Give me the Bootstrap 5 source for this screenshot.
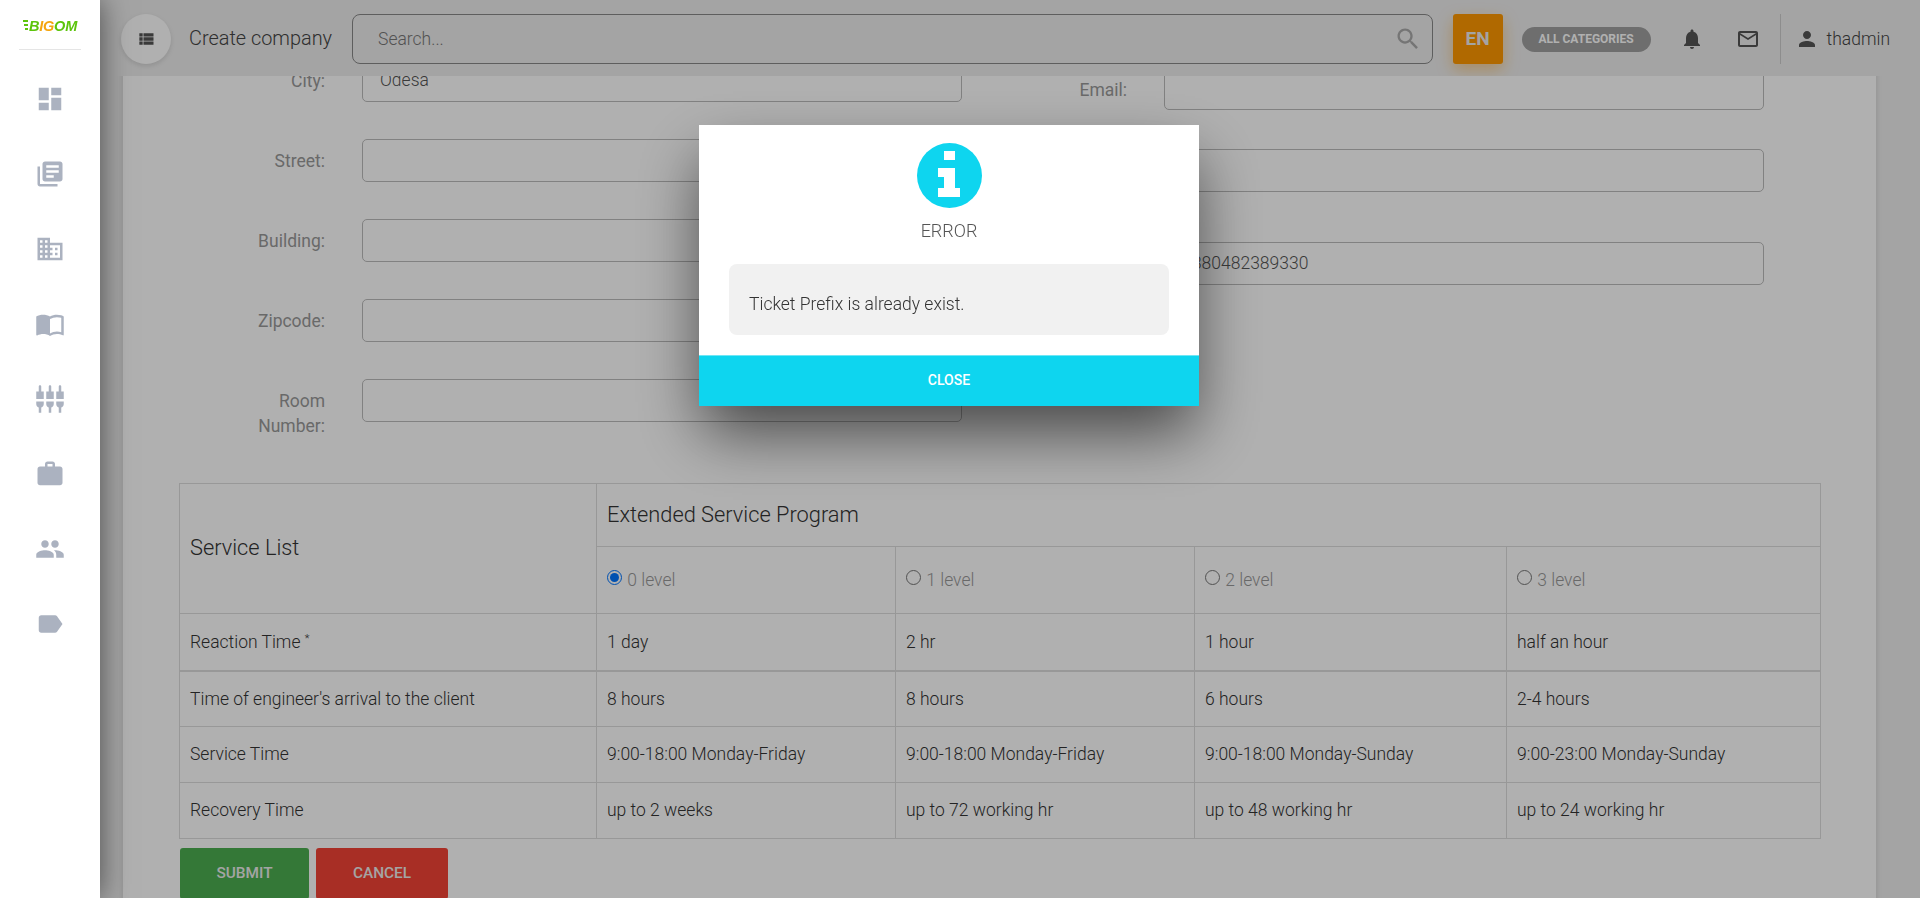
<!DOCTYPE html>
<html lang="en">
<head>
<meta charset="utf-8">
<title>Create company</title>
<link href="https://cdn.jsdelivr.net/npm/bootstrap@5.3.0/dist/css/bootstrap.min.css" rel="stylesheet">
<style>
html,body{height:100%;overflow:hidden}
body{font-family:Roboto,"Liberation Sans",sans-serif;font-weight:300;background:#eee;color:#333}
.shell{height:898px}
.side{width:100px;flex:none;background:#fff;position:relative;z-index:20;box-shadow:0 0 28px rgba(0,0,0,.55)}
.logo-wrap{height:50px;margin:0 19px;border-bottom:1px solid #e5e5e5;padding-top:19px;gap:1px}
.logo-txt{font:italic 700 14.5px/14px "Liberation Sans",sans-serif;letter-spacing:-.2px;color:#5cc40c}
.logo-txt b{color:#f5a50f;font-weight:700}
.side-ic{width:30px;height:30px;fill:#abb2c0;display:block}
.side-list{padding-top:34px;gap:45px}
.main-col{min-width:0;height:898px}
.topbar{height:76px;padding:14px 30px 12px 21px;flex:none}
.round-btn{width:50px;height:50px;border-radius:50%;background:#fff;box-shadow:0 2px 5px rgba(0,0,0,.12);flex:none}
.round-btn svg{width:20px;height:20px;fill:#555}
.page-name{font-size:19.9px;color:#444;margin:0 20px 0 18px;white-space:nowrap}
.search-box{flex:1;height:50px;border:1px solid #888;border-radius:8px;padding:0 10px 0 25px;background:transparent}
.search-box span{font-size:17.5px;color:#777}
.search-box svg{width:28px;height:28px;fill:#aaa}
.lang{width:50px;height:50px;background:#ff9800;color:#eee;font-weight:700;font-size:19px;border-radius:3px;margin-left:20px;box-shadow:0 6px 16px rgba(255,152,0,.4);flex:none}
.cat-pill{height:25px;width:129px;margin-left:19px;border-radius:13px;background:#a0a0a0;color:#fff;font-size:12px;font-weight:700;flex:none}
.top-ic{width:24px;height:24px;fill:#555;flex:none}
.ic-bell{margin-left:29px}
.ic-mail{margin-left:32px}
.top-div{width:1px;height:50px;background:#ccc;margin-left:20px;margin-right:14px;flex:none}
.user-name{font-size:17.5px;color:#444;margin-left:8px}
.content-clip{flex:1;overflow:hidden;padding:0 44px 0 23px}
.sheet{background:#fff;margin-top:-200px;padding:183px 56px 0;min-height:1100px;box-shadow:0 1px 6px rgba(0,0,0,.14)}
.form-cols{gap:19px}
.form-side{width:783px}
.field-line{height:43px;margin-bottom:37px}
.field-lbl{width:100px;flex:none;margin-left:46px;padding-top:1px;text-align:right;font-size:17.5px;font-weight:400;color:#999;line-height:25px;margin-right:37px}
.field-input{flex:1;height:43px;border:1px solid #bbb;border-radius:5px;padding:0 17px;font-size:17.5px;line-height:41px;color:#555;background:#fff}
.lbl-low{padding-top:10px}
.lbl-drop{padding-top:3px}
.right-side{padding-top:8px}
.right-side .field-line:nth-child(1){margin-bottom:39px}
.right-side .field-line:nth-child(2){margin-bottom:50px}
.svc-table{width:1641px;table-layout:fixed;border-collapse:collapse;margin-top:24px;font-size:17.5px}
.svc-table td,.svc-table th{border:1px solid #ddd;padding:0 10px;font-weight:300;vertical-align:middle}
.svc-table .big{font-size:21.8px}
.svc-table .h1r{height:63px}
.svc-table .h2r{height:67px;color:#999}
.svc-table .h3r{height:57px;border-bottom:2px solid #ddd}
.svc-table .h3r td{border-bottom:2px solid #ddd}
.svc-table .h4r{height:56px}
.svc-table sup{font-size:11px}
.svc-table input{margin:0 1px 0 0;width:15px;height:15px;vertical-align:1px}
.btn-row{gap:7px;margin:9px 0 0 1px}
.act-btn{height:51px;border:0;border-radius:3px;color:#eee;font-size:15.4px;font-weight:500;padding:0}
.act-ok{width:129px;background:#4caf50}
.act-no{width:132px;background:#f44336}
.dim{position:fixed;inset:0;background:rgba(0,0,0,.31);z-index:10}
.alert-box{position:fixed;left:699px;top:125px;width:500px;height:281px;background:#fff;z-index:30;box-shadow:0 30px 60px -4px rgba(0,0,0,.6)}
.alert-ic{width:65px;height:65px;margin-top:18px;display:block}
.alert-ttl{font-size:18px;color:#555;margin-top:11px;line-height:24px;height:24px}
.alert-msg{margin:21px 30px 0 30px;height:71px;background:#f1f1f1;border-radius:8px;padding:28px 20px 0;font-size:17.5px;line-height:24px;color:#333}
.alert-close{position:absolute;left:0;right:0;bottom:0;height:51px;background:#0ed5ef;border:0;border-top:1px solid #6fe6f5;color:#fff;font-size:14px;font-weight:500;padding:0 0 2px}
</style>
</head>
<body>
<div class="shell d-flex">
  <aside class="side d-flex flex-column">
    <div class="logo-wrap d-flex align-items-start justify-content-center">
      <svg width="5" height="12" viewBox="0 0 5 12"><rect x="0" y="1" width="5" height="2" fill="#5cc40c"/><rect x="1" y="5" width="4" height="2" fill="#5cc40c"/><rect x="2" y="9" width="3" height="2" fill="#5cc40c"/></svg>
      <span class="logo-txt">B<b>IG</b>OM</span>
    </div>
    <div class="side-list d-flex flex-column align-items-center">
      <svg class="side-ic" viewBox="0 0 24 24"><path d="M3 13h8V3H3v10zm0 8h8v-6H3v6zm10 0h8V11h-8v10zm0-18v6h8V3h-8z"/></svg>
      <svg class="side-ic" viewBox="0 0 24 24"><path d="M4 6H2v14c0 1.1.9 2 2 2h14v-2H4V6zm16-4H8c-1.1 0-2 .9-2 2v12c0 1.1.9 2 2 2h12c1.1 0 2-.9 2-2V4c0-1.1-.9-2-2-2zm-1 9H9V9h10v2zm-4 4H9v-2h6v2zm4-8H9V5h10v2z"/></svg>
      <svg class="side-ic" viewBox="0 0 24 24"><path d="M12 7V3H2v18h20V7H12zM6 19H4v-2h2v2zm0-4H4v-2h2v2zm0-4H4V9h2v2zm0-4H4V5h2v2zm4 12H8v-2h2v2zm0-4H8v-2h2v2zm0-4H8V9h2v2zm0-4H8V5h2v2zm10 12h-8v-2h2v-2h-2v-2h2v-2h-2V9h8v10zm-2-8h-2v2h2v-2zm0 4h-2v2h2v-2z"/></svg>
      <svg class="side-ic" viewBox="0 0 24 24"><path d="M21 5c-1.11-.35-2.33-.5-3.5-.5-1.95 0-4.05.4-5.5 1.5-1.45-1.1-3.55-1.5-5.5-1.5S2.45 4.9 1 6v14.65c0 .25.25.5.5.5.1 0 .15-.05.25-.05C3.1 20.45 5.05 20 6.5 20c1.95 0 4.05.4 5.5 1.5 1.35-.85 3.8-1.5 5.5-1.5 1.65 0 3.35.3 4.75 1.05.1.05.15.05.25.05.25 0 .5-.25.5-.5V6c-.6-.45-1.25-.75-2-1zm0 13.5c-1.1-.35-2.3-.5-3.5-.5-1.7 0-4.15.65-5.5 1.5V8c1.35-.85 3.8-1.5 5.5-1.5 1.2 0 2.4.15 3.5.5v11.5z"/></svg>
      <svg class="side-ic" viewBox="0 0 24 24"><path d="M5 2c0-.55-.45-1-1-1s-1 .45-1 1v4H1v6h6V6H5V2zm4 14c0 1.3.84 2.4 2 2.82V23h2v-4.18c1.16-.41 2-1.51 2-2.82v-2H9v2zm-8 0c0 1.3.84 2.4 2 2.82V23h2v-4.18C6.16 18.4 7 17.3 7 16v-2H1v2zM21 6V2c0-.55-.45-1-1-1s-1 .45-1 1v4h-2v6h6V6h-2zm-8-4c0-.55-.45-1-1-1s-1 .45-1 1v4H9v6h6V6h-2V2zm4 14c0 1.3.84 2.4 2 2.82V23h2v-4.18c1.16-.41 2-1.51 2-2.82v-2h-6v2z"/></svg>
      <svg class="side-ic" viewBox="0 0 24 24"><path d="M20 6h-4V4c0-1.11-.89-2-2-2h-4c-1.11 0-2 .89-2 2v2H4c-1.11 0-1.99.89-1.99 2L2 19c0 1.11.89 2 2 2h16c1.11 0 2-.89 2-2V8c0-1.11-.89-2-2-2zm-6 0h-4V4h4v2z"/></svg>
      <svg class="side-ic" viewBox="0 0 24 24"><path d="M16 11c1.66 0 2.99-1.34 2.99-3S17.66 5 16 5c-1.66 0-3 1.34-3 3s1.34 3 3 3zm-8 0c1.66 0 2.99-1.34 2.99-3S9.66 5 8 5C6.34 5 5 6.34 5 8s1.34 3 3 3zm0 2c-2.33 0-7 1.17-7 3.5V19h14v-2.5c0-2.33-4.67-3.5-7-3.5zm8 0c-.29 0-.62.02-.97.05 1.16.84 1.97 1.97 1.97 3.45V19h6v-2.5c0-2.33-4.67-3.5-7-3.5z"/></svg>
      <svg class="side-ic" viewBox="0 0 24 24"><path d="M17.63 5.84C17.27 5.33 16.67 5 16 5L5 5.01C3.9 5.01 3 5.9 3 7v10c0 1.1.9 1.99 2 1.99L16 19c.67 0 1.27-.33 1.63-.84L22 12l-4.37-6.16z"/></svg>
    </div>
  </aside>
  <div class="main-col flex-grow-1 d-flex flex-column">
    <header class="topbar d-flex align-items-center">
      <div class="round-btn d-flex align-items-center justify-content-center"><svg viewBox="0 0 24 24"><path d="M4 14h4v-4H4v4zm0 5h4v-4H4v4zM4 9h4V5H4v4zm5 5h12v-4H9v4zm0 5h12v-4H9v4zM9 5v4h12V5H9z"/></svg></div>
      <span class="page-name">Create company</span>
      <div class="search-box d-flex align-items-center justify-content-between"><span>Search...</span><svg viewBox="0 0 24 24"><path d="M15.5 14h-.79l-.28-.27C15.41 12.59 16 11.11 16 9.5 16 5.91 13.09 3 9.5 3S3 5.91 3 9.5 5.91 16 9.5 16c1.61 0 3.09-.59 4.23-1.57l.27.28v.79l5 4.99L20.49 19l-4.99-5zm-6 0C7.01 14 5 11.99 5 9.5S7.01 5 9.5 5 14 7.01 14 9.5 11.99 14 9.5 14z"/></svg></div>
      <div class="lang d-flex align-items-center justify-content-center">EN</div>
      <div class="cat-pill d-flex align-items-center justify-content-center">ALL CATEGORIES</div>
      <svg class="top-ic ic-bell" viewBox="0 0 24 24"><path d="M12 22c1.1 0 2-.9 2-2h-4c0 1.1.89 2 2 2zm6-6v-5c0-3.07-1.64-5.64-4.5-6.32V4c0-.83-.67-1.5-1.5-1.5s-1.5.67-1.5 1.5v.68C7.63 5.36 6 7.92 6 11v5l-2 2v1h16v-1l-2-2z"/></svg>
      <svg class="top-ic ic-mail" viewBox="0 0 24 24"><path d="M20 4H4c-1.1 0-1.99.9-1.99 2L2 18c0 1.1.9 2 2 2h16c1.1 0 2-.9 2-2V6c0-1.1-.9-2-2-2zm0 14H4V8l8 5 8-5v10zm-8-7L4 6h16l-8 5z"/></svg>
      <div class="top-div"></div>
      <svg class="top-ic" viewBox="0 0 24 24"><path d="M12 12c2.21 0 4-1.79 4-4s-1.79-4-4-4-4 1.79-4 4 1.79 4 4 4zm0 2c-2.67 0-8 1.34-8 4v2h16v-2c0-2.66-5.33-4-8-4z"/></svg>
      <span class="user-name">thadmin</span>
    </header>
    <div class="content-clip">
      <div class="sheet">
        <div class="form-cols d-flex">
          <div class="form-side">
            <div class="field-line d-flex align-items-center"><div class="field-lbl">City:</div><div class="field-input">Odesa</div></div>
            <div class="field-line d-flex align-items-center"><div class="field-lbl">Street:</div><div class="field-input"></div></div>
            <div class="field-line d-flex align-items-center"><div class="field-lbl">Building:</div><div class="field-input"></div></div>
            <div class="field-line d-flex align-items-center"><div class="field-lbl">Zipcode:</div><div class="field-input"></div></div>
            <div class="field-line d-flex align-items-start"><div class="field-lbl lbl-low">Room Number:</div><div class="field-input"></div></div>
          </div>
          <div class="form-side right-side">
            <div class="field-line d-flex align-items-center"><div class="field-lbl lbl-drop">Email:</div><div class="field-input"></div></div>
            <div class="field-line d-flex"><div class="field-lbl"></div><div class="field-input"></div></div>
            <div class="field-line d-flex"><div class="field-lbl"></div><div class="field-input">+380482389330</div></div>
          </div>
        </div>
        <table class="svc-table">
          <colgroup><col style="width:417px"><col style="width:299px"><col style="width:299px"><col style="width:312px"><col style="width:314px"></colgroup>
          <tbody>
            <tr class="h1r"><td rowspan="2" class="big">Service List</td><td colspan="4" class="big">Extended Service Program</td></tr>
            <tr class="h2r">
              <td><input type="radio" name="lvl" checked> 0 level</td>
              <td><input type="radio" name="lvl"> 1 level</td>
              <td><input type="radio" name="lvl"> 2 level</td>
              <td><input type="radio" name="lvl"> 3 level</td>
            </tr>
            <tr class="h3r"><td>Reaction Time <sup>*</sup></td><td>1 day</td><td>2 hr</td><td>1 hour</td><td>half an hour</td></tr>
            <tr class="h4r"><td>Time of engineer's arrival to the client</td><td>8 hours</td><td>8 hours</td><td>6 hours</td><td>2-4 hours</td></tr>
            <tr class="h4r"><td>Service Time</td><td>9:00-18:00 Monday-Friday</td><td>9:00-18:00 Monday-Friday</td><td>9:00-18:00 Monday-Sunday</td><td>9:00-23:00 Monday-Sunday</td></tr>
            <tr class="h4r"><td>Recovery Time</td><td>up to 2 weeks</td><td>up to 72 working hr</td><td>up to 48 working hr</td><td>up to 24 working hr</td></tr>
          </tbody>
        </table>
        <div class="btn-row d-flex">
          <button type="button" class="act-btn act-ok">SUBMIT</button>
          <button type="button" class="act-btn act-no">CANCEL</button>
        </div>
      </div>
    </div>
  </div>
</div>
<div class="dim"></div>
<div class="alert-box text-center">
  <svg class="alert-ic mx-auto" viewBox="0 0 65 65"><circle cx="32.5" cy="32.5" r="32.5" fill="#0ed5ef"/><path fill="#fff" d="M27 8h11v9H27zM21 25h17v20h5v9H21v-9h6V34h-6z"/></svg>
  <div class="alert-ttl">ERROR</div>
  <div class="alert-msg text-start">Ticket Prefix is already exist.</div>
  <button type="button" class="alert-close">CLOSE</button>
</div>
</body>
</html>
